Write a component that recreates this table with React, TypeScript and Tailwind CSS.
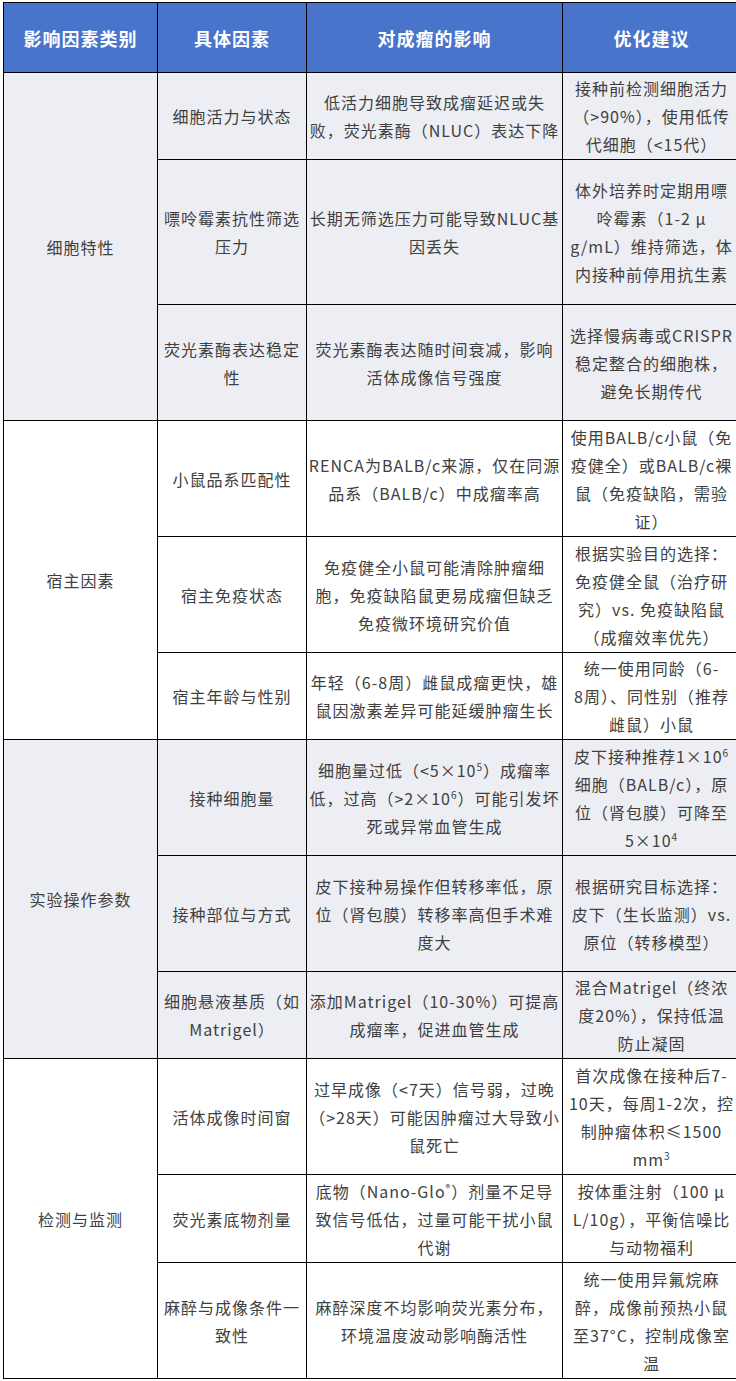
import React from "react";

type Row = {
  factor: React.ReactNode[];
  impact: React.ReactNode[];
  advice: React.ReactNode[];
  h: string;
};

type Group = {
  name: string;
  bg: string;
  rows: Row[];
};

const Sup = ({ children }: { children: React.ReactNode }) => (
  <sup className="text-[10px] -top-[0.6em]">{children}</sup>
);

const groups: Group[] = [
  {
    name: "细胞特性",
    bg: "bg-[#edeef3]",
    rows: [
      {
        h: "h-[87px]",
        factor: ["细胞活力与状态"],
        impact: ["低活力细胞导致成瘤延迟或失", "败，荧光素酶（NLUC）表达下降"],
        advice: ["接种前检测细胞活力", "（>90%），使用低传", "代细胞（<15代）"],
      },
      {
        h: "h-[145px]",
        factor: ["嘌呤霉素抗性筛选", "压力"],
        impact: ["长期无筛选压力可能导致NLUC基", "因丢失"],
        advice: ["体外培养时定期用嘌", "呤霉素（1-2 μ", "g/mL）维持筛选，体", "内接种前停用抗生素"],
      },
      {
        h: "h-[116px]",
        factor: ["荧光素酶表达稳定", "性"],
        impact: ["荧光素酶表达随时间衰减，影响", "活体成像信号强度"],
        advice: ["选择慢病毒或CRISPR", "稳定整合的细胞株，", "避免长期传代"],
      },
    ],
  },
  {
    name: "宿主因素",
    bg: "bg-white",
    rows: [
      {
        h: "h-[116px]",
        factor: ["小鼠品系匹配性"],
        impact: ["RENCA为BALB/c来源，仅在同源", "品系（BALB/c）中成瘤率高"],
        advice: ["使用BALB/c小鼠（免", "疫健全）或BALB/c裸", "鼠（免疫缺陷，需验", "证）"],
      },
      {
        h: "h-[116px]",
        factor: ["宿主免疫状态"],
        impact: ["免疫健全小鼠可能清除肿瘤细", "胞，免疫缺陷鼠更易成瘤但缺乏", "免疫微环境研究价值"],
        advice: ["根据实验目的选择：", "免疫健全鼠（治疗研", "究）vs. 免疫缺陷鼠", "（成瘤效率优先）"],
      },
      {
        h: "h-[87px]",
        factor: ["宿主年龄与性别"],
        impact: ["年轻（6-8周）雌鼠成瘤更快，雄", "鼠因激素差异可能延缓肿瘤生长"],
        advice: ["统一使用同龄（6-", "8周）、同性别（推荐", "雌鼠）小鼠"],
      },
    ],
  },
  {
    name: "实验操作参数",
    bg: "bg-[#edeef3]",
    rows: [
      {
        h: "h-[116px]",
        factor: ["接种细胞量"],
        impact: [
          <>细胞量过低（&lt;5×10<Sup>5</Sup>）成瘤率</>,
          <>低，过高（&gt;2×10<Sup>6</Sup>）可能引发坏</>,
          "死或异常血管生成",
        ],
        advice: [
          <>皮下接种推荐1×10<Sup>6</Sup></>,
          "细胞（BALB/c），原",
          "位（肾包膜）可降至",
          <>5×10<Sup>4</Sup></>,
        ],
      },
      {
        h: "h-[116px]",
        factor: ["接种部位与方式"],
        impact: ["皮下接种易操作但转移率低，原", "位（肾包膜）转移率高但手术难", "度大"],
        advice: ["根据研究目标选择：", "皮下（生长监测）vs.", "原位（转移模型）"],
      },
      {
        h: "h-[87px]",
        factor: ["细胞悬液基质（如", "Matrigel）"],
        impact: ["添加Matrigel（10-30%）可提高", "成瘤率，促进血管生成"],
        advice: ["混合Matrigel（终浓", "度20%），保持低温", "防止凝固"],
      },
    ],
  },
  {
    name: "检测与监测",
    bg: "bg-white",
    rows: [
      {
        h: "h-[116px]",
        factor: ["活体成像时间窗"],
        impact: ["过早成像（<7天）信号弱，过晚", "（>28天）可能因肿瘤过大导致小", "鼠死亡"],
        advice: [
          "首次成像在接种后7-",
          "10天，每周1-2次，控",
          "制肿瘤体积≤1500",
          <>mm<Sup>3</Sup></>,
        ],
      },
      {
        h: "h-[88px]",
        factor: ["荧光素底物剂量"],
        impact: [
          <>底物（Nano-Glo<Sup>®</Sup>）剂量不足导</>,
          "致信号低估，过量可能干扰小鼠",
          "代谢",
        ],
        advice: ["按体重注射（100 μ", "L/10g），平衡信噪比", "与动物福利"],
      },
      {
        h: "h-[116px]",
        factor: ["麻醉与成像条件一", "致性"],
        impact: ["麻醉深度不均影响荧光素分布，", "环境温度波动影响酶活性"],
        advice: ["统一使用异氟烷麻", "醉，成像前预热小鼠", "至37°C，控制成像室", "温"],
      },
    ],
  },
];

function Lines({ lines }: { lines: React.ReactNode[] }) {
  return (
    <>
      {lines.map((l, i) => (
        <div key={i} className="whitespace-nowrap">
          {l}
        </div>
      ))}
    </>
  );
}

const cell = "border border-black text-center align-middle p-0";

export default function App() {
  return (
    <div className="w-[736px] h-[1381px] overflow-hidden bg-white pl-[3px] pt-[2px]">
      <table
        className="table-fixed border-collapse w-[737px] text-[16px] leading-[28px] text-[#404040] tracking-[1px]"
        style={{ fontFamily: '"Noto Sans CJK SC", "Noto Sans", sans-serif' }}
      >
        <colgroup>
          <col className="w-[154px]" />
          <col className="w-[149px]" />
          <col className="w-[256px]" />
          <col className="w-[178px]" />
        </colgroup>
        <thead>
          <tr className="h-[70px] bg-[#4874cb] text-white text-[18px] font-bold tracking-[1px]">
            <th className={cell}>影响因素类别</th>
            <th className={cell}>具体因素</th>
            <th className={cell}>对成瘤的影响</th>
            <th className={cell}>优化建议</th>
          </tr>
        </thead>
        <tbody>
          {groups.map((g) =>
            g.rows.map((r, i) => (
              <tr key={g.name + i} className={`${r.h} ${g.bg}`}>
                {i === 0 && (
                  <td rowSpan={g.rows.length} className={cell}>
                    {g.name}
                  </td>
                )}
                <td className={cell}>
                  <Lines lines={r.factor} />
                </td>
                <td className={cell}>
                  <Lines lines={r.impact} />
                </td>
                <td className={cell}>
                  <Lines lines={r.advice} />
                </td>
              </tr>
            ))
          )}
        </tbody>
      </table>
    </div>
  );
}
